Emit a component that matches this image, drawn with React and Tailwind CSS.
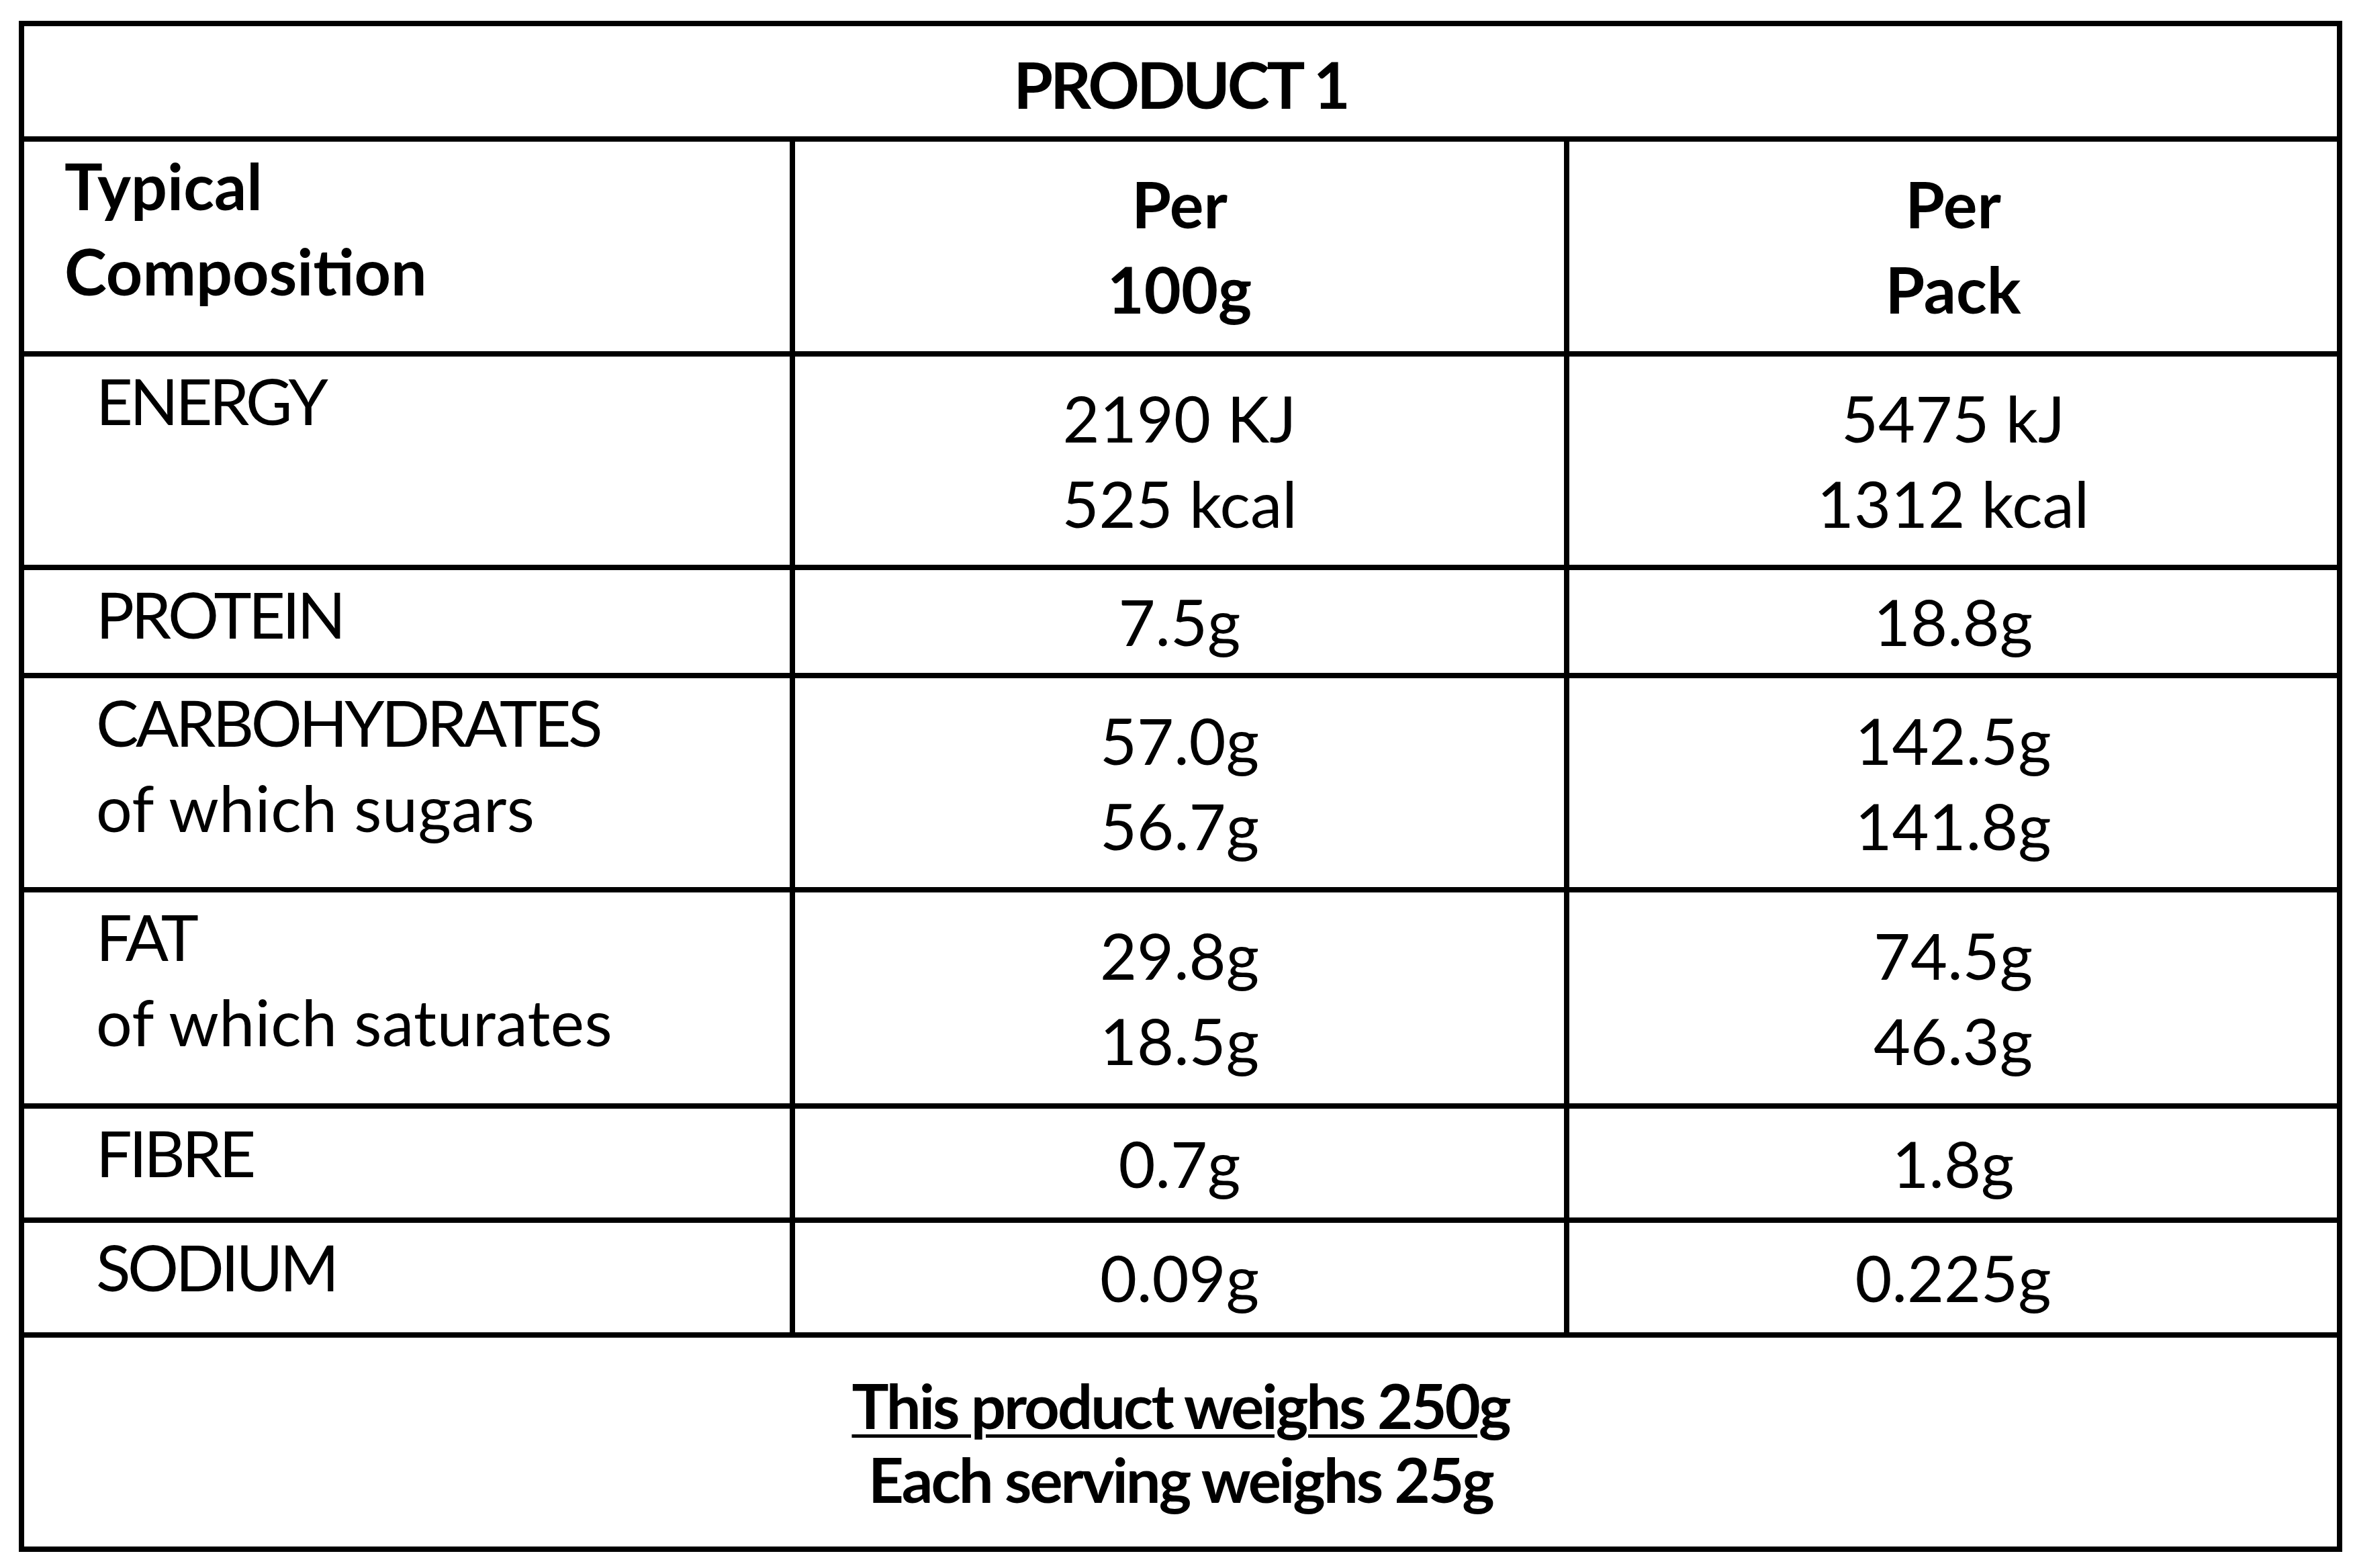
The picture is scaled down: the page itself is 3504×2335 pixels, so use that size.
import React from "react";

// heights include the 8px top rule (border-box)
const rows = [
  { label: ["ENERGY"], per100: ["2190 KJ", "525 kcal"], perPack: ["5475 kJ", "1312 kcal"], h: "h-[318px]" },
  { label: ["PROTEIN"], per100: ["7.5g"], perPack: ["18.8g"], h: "h-[161px]" },
  { label: ["CARBOHYDRATES", "of which sugars"], per100: ["57.0g", "56.7g"], perPack: ["142.5g", "141.8g"], h: "h-[319px]" },
  { label: ["FAT", "of which saturates"], per100: ["29.8g", "18.5g"], perPack: ["74.5g", "46.3g"], h: "h-[322px]" },
  { label: ["FIBRE"], per100: ["0.7g"], perPack: ["1.8g"], h: "h-[170px]" },
  { label: ["SODIUM"], per100: ["0.09g"], perPack: ["0.225g"], h: "h-[171px]" },
];

const Label = ({ items }) =>
  items.map((t) => (
    <div key={t} className={t === t.toUpperCase() ? "tracking-[-4.5px]" : "tracking-[0.5px]"}>
      {t}
    </div>
  ));

const Lines = ({ items }) => items.map((t) => <div key={t}>{t}</div>);

const Row = ({ row }) => (
  <div className={`grid grid-cols-[1140px_1153px_1fr] border-t-8 border-black ${row.h}`}>
    <div className="pl-[107px] pt-0.5">
      <Label items={row.label} />
    </div>
    <div className="flex flex-col items-center justify-center border-l-8 border-black">
      <Lines items={row.per100} />
    </div>
    <div className="flex flex-col items-center justify-center border-l-8 border-black">
      <Lines items={row.perPack} />
    </div>
  </div>
);

export default function App() {
  return (
    <div className="min-h-screen bg-white pl-[28px] pt-[31px] font-[Lato,'Open_Sans',sans-serif] text-[95px] leading-[127px] text-black">
      <div className="w-[3460px] border-8 border-black">
        <div className="flex h-[164px] items-center justify-center pt-2 font-bold tracking-[-4px]">PRODUCT 1</div>

        <div className="grid h-[320px] grid-cols-[1140px_1153px_1fr] border-t-8 border-black font-bold">
          <div className="pl-[60px] pt-0.5">
            <div>Typical</div>
            <div>Composition</div>
          </div>
          <div className="flex flex-col items-center justify-center border-l-8 border-black">
            <div>Per</div>
            <div>100g</div>
          </div>
          <div className="flex flex-col items-center justify-center border-l-8 border-black">
            <div>Per</div>
            <div>Pack</div>
          </div>
        </div>

        {rows.map((row) => (
          <Row key={row.label[0]} row={row} />
        ))}

        <div className="flex h-[319px] flex-col items-center justify-center border-t-8 border-black text-[92px] font-bold leading-[110px] tracking-[-3px]">
          <div className="underline decoration-[5px] underline-offset-[8px]">This product weighs 250g</div>
          <div>Each serving weighs 25g</div>
        </div>
      </div>
    </div>
  );
}
